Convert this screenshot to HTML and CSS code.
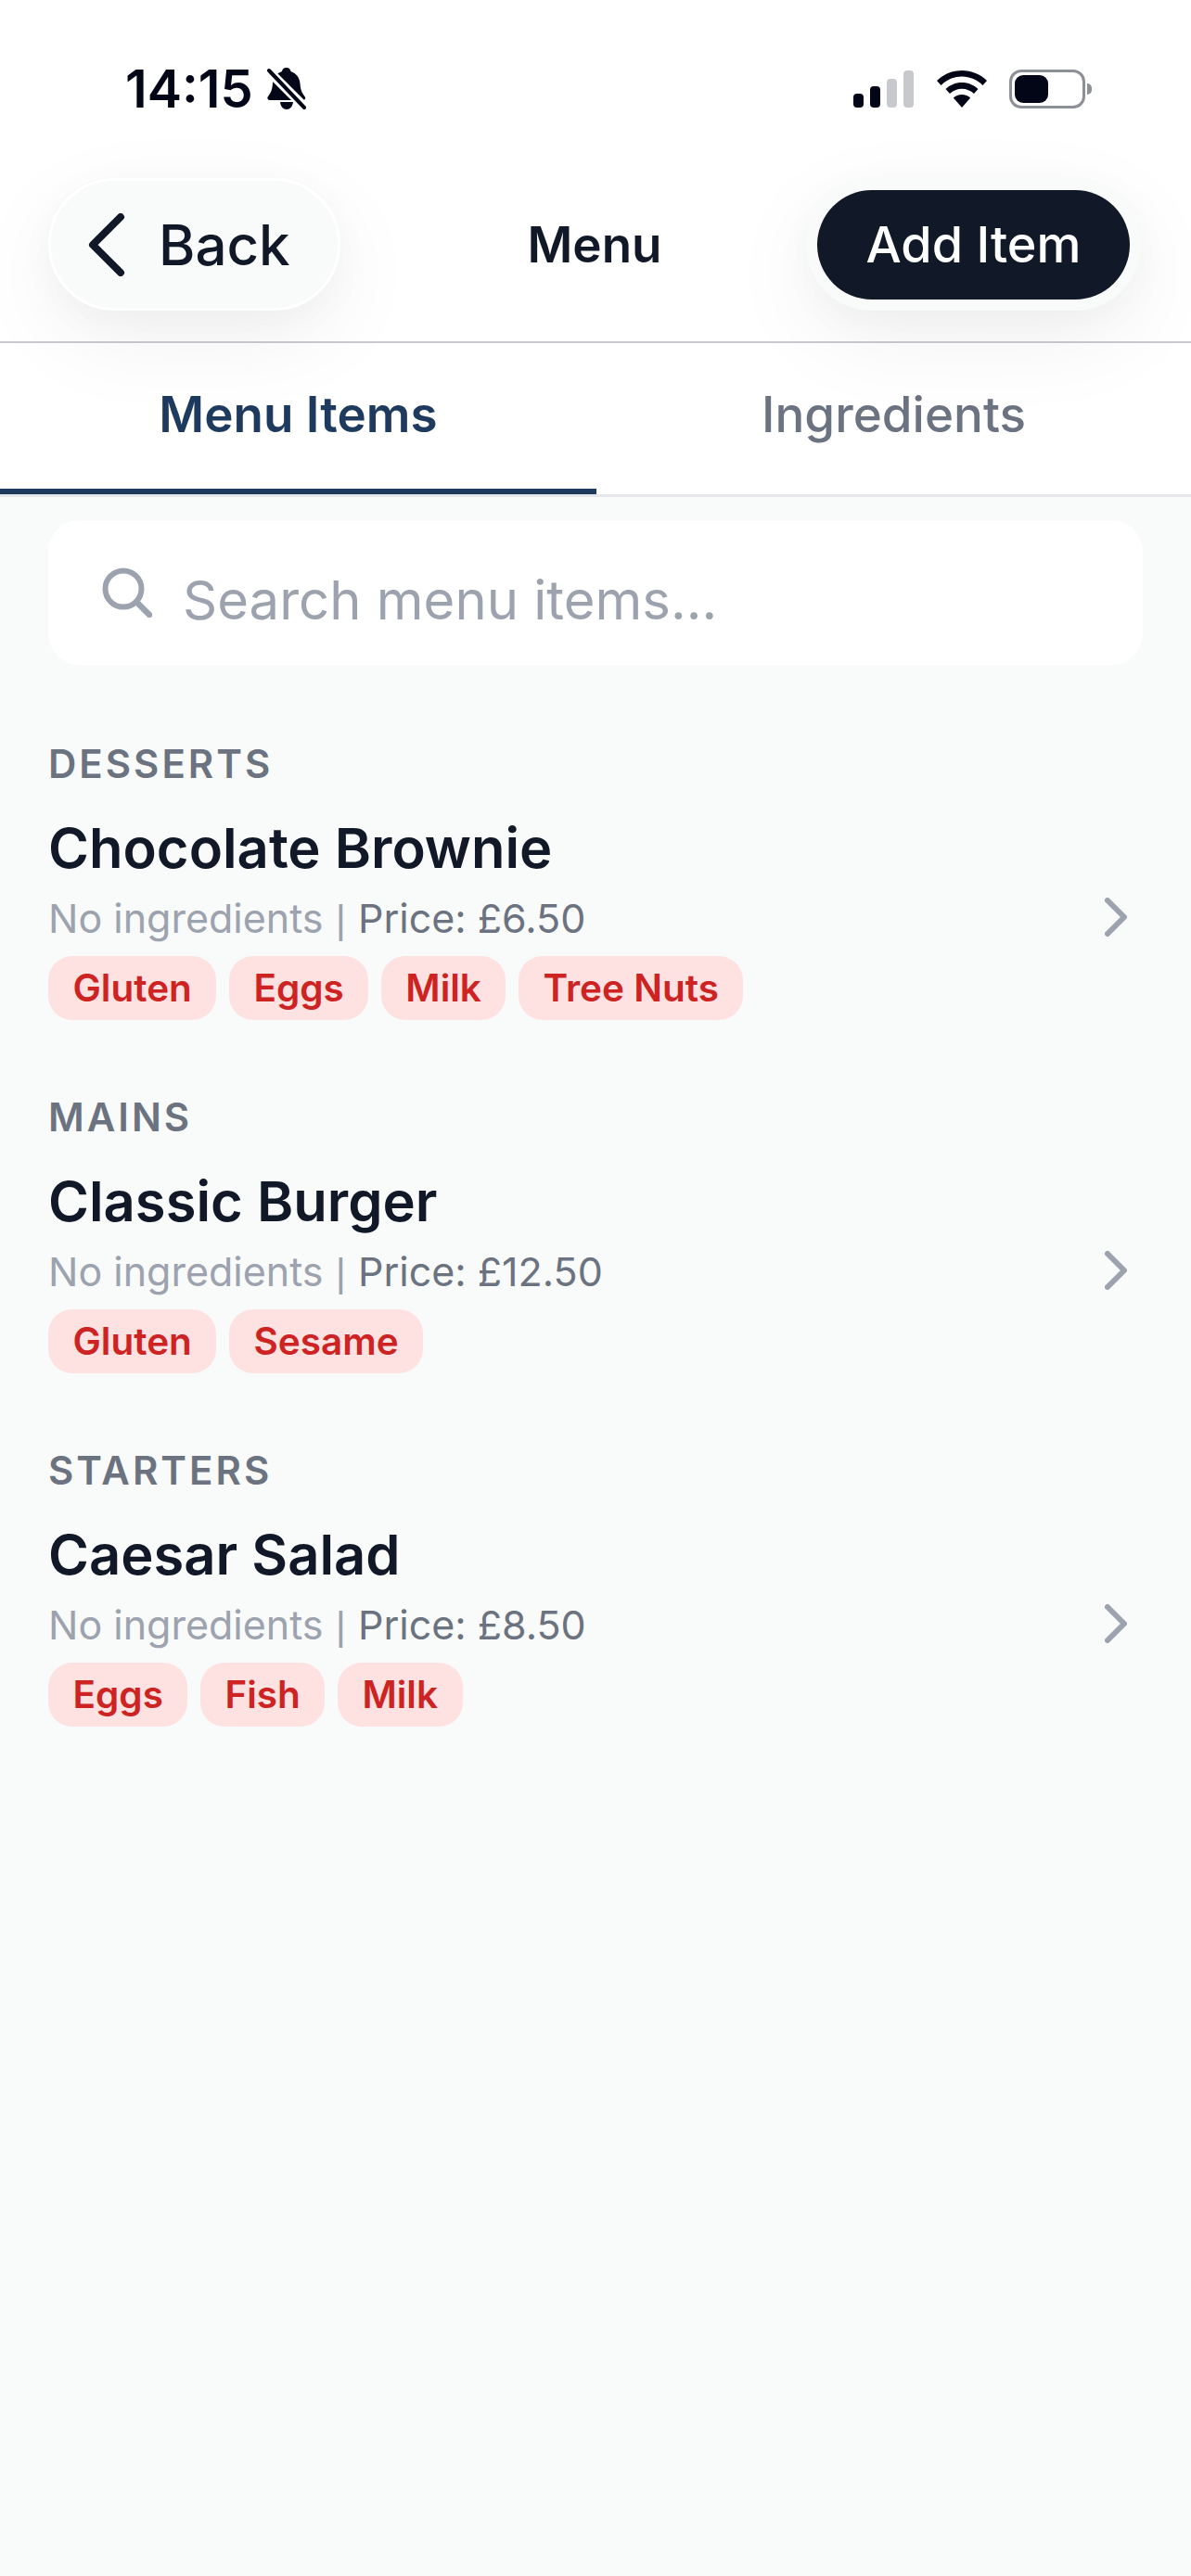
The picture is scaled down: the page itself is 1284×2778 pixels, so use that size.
FILE: index.html
```html
<!DOCTYPE html>
<html lang="en">
<head>
<meta charset="utf-8">
<title>Menu</title>
<link rel="stylesheet" href="styles.css">
</head>
<body>
<div class="app">
  <header class="header">
    <div class="status">
      <div class="status-left">
        <span class="time">14:15</span>
        <svg class="bell" width="42" height="46" viewBox="0 0 42 46">
          <path fill="#020617" d="M21 0c3 0 4 2 4.500 4 6 2 9.500 7 10 13 .5 7 2 10 5 14 1.500 2 .5 4-2 4H3c-2.500 0-3.500-2-2-4 3-4 4.500-7 5-14 .5-6 4-11 10-13 .5-2 1.500-4 5-4z"/>
          <path fill="#020617" d="M14 37h14c-.5 5-3.500 8-7 8s-6.500-3-7-8z"/>
          <path stroke="#fff" stroke-width="10" d="M-3-1 44 46"/>
          <path stroke="#020617" stroke-width="4" stroke-linecap="round" d="M2 3 40 43"/>
        </svg>
      </div>
      <div class="status-right">
        <div class="signal">
          <span class="bar bar-1"></span>
          <span class="bar bar-2"></span>
          <span class="bar bar-3"></span>
          <span class="bar bar-4"></span>
        </div>
        <svg class="wifi" width="54" height="40" viewBox="0 0 54 40">
          <path fill="#020617" d="M27 0c10.500 0 20 4 27 11l-4.500 5C43.500 10 35.500 6.500 27 6.500S10.500 10 4.500 16L0 11C7 4 16.500 0 27 0z"/>
          <path fill="#020617" d="M27 13c7 0 13 2.700 17.500 7L40 25c-3.500-3.300-8-5.300-13-5.300S17.500 21.700 14 25l-4.500-5C14 15.700 20 13 27 13z"/>
          <path fill="#020617" d="M27 26c3.700 0 6.800 1.300 9.200 3.500L27 40l-9.200-10.500C20.200 27.300 23.300 26 27 26z"/>
        </svg>
        <div class="battery">
          <div class="battery-body"><span class="battery-fill"></span></div>
          <span class="battery-nub"></span>
        </div>
      </div>
    </div>
    <nav class="nav">
      <button class="back" type="button">
        <svg class="back-icon" width="40" height="68" viewBox="0 0 40 68">
          <path fill="none" stroke="#111827" stroke-width="8" stroke-linecap="round" stroke-linejoin="round" d="M35 4 5 34l30 30"/>
        </svg>
        <span>Back</span>
      </button>
      <h1 class="nav-title">Menu</h1>
      <div class="add-wrap">
        <button class="add" type="button">Add Item</button>
      </div>
    </nav>
  </header>

  <div class="tabs">
    <div class="tab tab-active">Menu Items</div>
    <div class="tab">Ingredients</div>
  </div>

  <main class="content">
    <div class="search">
      <svg class="search-icon" width="54" height="54" viewBox="0 0 54 54">
        <circle cx="23" cy="23" r="19.500" fill="none" stroke="#9ca3af" stroke-width="6"/>
        <path stroke="#9ca3af" stroke-width="6.500" stroke-linecap="round" d="M37 37l14 14"/>
      </svg>
      <span class="placeholder">Search menu items...</span>
    </div>

    <section class="group">
      <h2 class="group-title">DESSERTS</h2>
      <div class="item">
        <div class="item-body">
          <div class="item-name">Chocolate Brownie</div>
          <div class="item-sub"><span class="muted">No ingredients <span class="pipe">|</span> </span>Price: £6.50</div>
          <div class="tags">
            <span class="tag">Gluten</span><span class="tag">Eggs</span><span class="tag">Milk</span><span class="tag">Tree Nuts</span>
          </div>
        </div>
        <svg class="chevron" width="24" height="42" viewBox="0 0 24 42"><path fill="none" stroke="#9ca3af" stroke-width="6" stroke-linecap="round" stroke-linejoin="round" d="M3 3l18 18L3 39"/></svg>
      </div>
    </section>

    <section class="group">
      <h2 class="group-title">MAINS</h2>
      <div class="item">
        <div class="item-body">
          <div class="item-name">Classic Burger</div>
          <div class="item-sub"><span class="muted">No ingredients <span class="pipe">|</span> </span>Price: £12.50</div>
          <div class="tags">
            <span class="tag">Gluten</span><span class="tag">Sesame</span>
          </div>
        </div>
        <svg class="chevron" width="24" height="42" viewBox="0 0 24 42"><path fill="none" stroke="#9ca3af" stroke-width="6" stroke-linecap="round" stroke-linejoin="round" d="M3 3l18 18L3 39"/></svg>
      </div>
    </section>

    <section class="group">
      <h2 class="group-title">STARTERS</h2>
      <div class="item">
        <div class="item-body">
          <div class="item-name">Caesar Salad</div>
          <div class="item-sub"><span class="muted">No ingredients <span class="pipe">|</span> </span>Price: £8.50</div>
          <div class="tags">
            <span class="tag">Eggs</span><span class="tag">Fish</span><span class="tag">Milk</span>
          </div>
        </div>
        <svg class="chevron" width="24" height="42" viewBox="0 0 24 42"><path fill="none" stroke="#9ca3af" stroke-width="6" stroke-linecap="round" stroke-linejoin="round" d="M3 3l18 18L3 39"/></svg>
      </div>
    </section>
  </main>
</div>
</body>
</html>
```
FILE: styles.css
```css
* { box-sizing: border-box; margin: 0; padding: 0; }
html, body { height: 100%; }
body {
  background: #f9fafa;
  font-family: Inter, "Liberation Sans", sans-serif;
  color: #111827;
  overflow: hidden;
}
.app { display: flex; flex-direction: column; height: 2778px; }

.header {
  position: relative;
  z-index: 1;
  background: #fff;
  height: 370px;
  padding-top: 73px;
  border-bottom: 2px solid #c9cbcf;
}
.status {
  display: flex;
  justify-content: space-between;
  align-items: center;
  height: 46px;
  padding: 0 107px 0 135px;
}
.status-left { display: flex; align-items: center; gap: 15px; }
.time { font-size: 56px; font-weight: 600; line-height: 46px; color: #020617; }
.bell { display: block; overflow: hidden; }
.status-right { display: flex; align-items: center; gap: 24.500px; }
.signal { display: flex; align-items: flex-end; gap: 7px; height: 40px; }
.bar { display: block; width: 11px; border-radius: 4px; background: #020617; }
.bar-1 { height: 15px; }
.bar-2 { height: 23px; }
.bar-3 { height: 31px; background: #c7c9cc; }
.bar-4 { height: 40px; background: #c7c9cc; }
.wifi { display: block; }
.battery { display: flex; align-items: center; gap: 2px; }
.battery-body {
  width: 82px;
  height: 42px;
  border: 3px solid #8e9097;
  border-radius: 13px;
  padding: 3px;
  background: #fff;
}
.battery-fill { display: block; width: 36px; height: 30px; background: #020617; border-radius: 9px; }
.battery-nub { display: block; width: 5px; height: 12px; background: #8e9097; border-radius: 0 6px 6px 0; }

.nav {
  display: grid;
  grid-template-columns: 1fr auto 1fr;
  align-items: center;
  margin-top: 73px;
  padding: 0 54px 0 52px;
}
.back {
  justify-self: start;
  display: flex;
  align-items: center;
  gap: 36px;
  width: 315px;
  height: 143px;
  padding-left: 40px;
  background: #f9fafa;
  border: 3px solid #fff;
  border-radius: 72px;
  box-shadow: 0 30px 100px rgba(17, 24, 39, 0.06), 0 10px 40px rgba(17, 24, 39, 0.03);
  font: 500 60px Inter, "Liberation Sans", sans-serif;
  color: #111827;
}
.back-icon { display: block; flex: none; }
.nav-title { font-size: 53px; font-weight: 600; color: #111827; text-align: center; }
.add-wrap {
  justify-self: end;
  padding: 12px;
  background: #f9fafa;
  border-radius: 72px;
  box-shadow: 0 30px 100px rgba(17, 24, 39, 0.06), 0 10px 40px rgba(17, 24, 39, 0.03);
}
.add {
  display: block;
  width: 337px;
  height: 118px;
  border: 0;
  border-radius: 59px;
  background: #111827;
  color: #fff;
  font: 500 54px Inter, "Liberation Sans", sans-serif;
}

.tabs {
  display: grid;
  grid-template-columns: 643px 1fr;
  background: #fff;
  border-bottom: 3px solid #e5e7eb;
}
.tab {
  display: flex;
  align-items: center;
  justify-content: center;
  height: 163px;
  padding-bottom: 3px;
  border-bottom: 6px solid transparent;
  font-size: 53px;
  font-weight: 500;
  color: #6b7280;
}
.tab-active {
  color: #1e3a5f;
  font-weight: 600;
  border-bottom-color: #1e3a5f;
}

.content { padding: 25px 52px 0; flex: 1; }
.search {
  display: flex;
  align-items: center;
  gap: 33px;
  height: 156px;
  padding-left: 58px;
  background: #fff;
  border-radius: 34px;
}
.search-icon { display: block; flex: none; }
.placeholder { font-size: 58px; padding-top: 16px; color: #9ca3af; }

.group { margin-top: 81px; }
.group + .group { margin-top: 79px; }
.group-title {
  font-size: 42px;
  line-height: 52px;
  font-weight: 600;
  letter-spacing: 3px;
  color: #6b7280;
}
.item {
  display: flex;
  align-items: center;
  justify-content: space-between;
  padding-right: 17px;
  margin-top: 27px;
}
.item-name { font-size: 59.700px; line-height: 74px; font-weight: 600; color: #111827; }
.item-sub { font-size: 43px; line-height: 54px; margin-top: 12px; color: #6b7280; }
.muted { color: #9ca3af; }
.pipe { font-family: "Liberation Sans", sans-serif; padding: 0 1px; }
.tags { display: flex; gap: 13.500px; margin-top: 13px; }
.tag {
  display: block;
  height: 69px;
  padding: 0 26.500px;
  background: #fee2e2;
  border-radius: 26px;
  font-size: 40.500px;
  line-height: 69px;
  font-weight: 600;
  color: #cd2323;
}
.chevron { display: block; flex: none; }
```
